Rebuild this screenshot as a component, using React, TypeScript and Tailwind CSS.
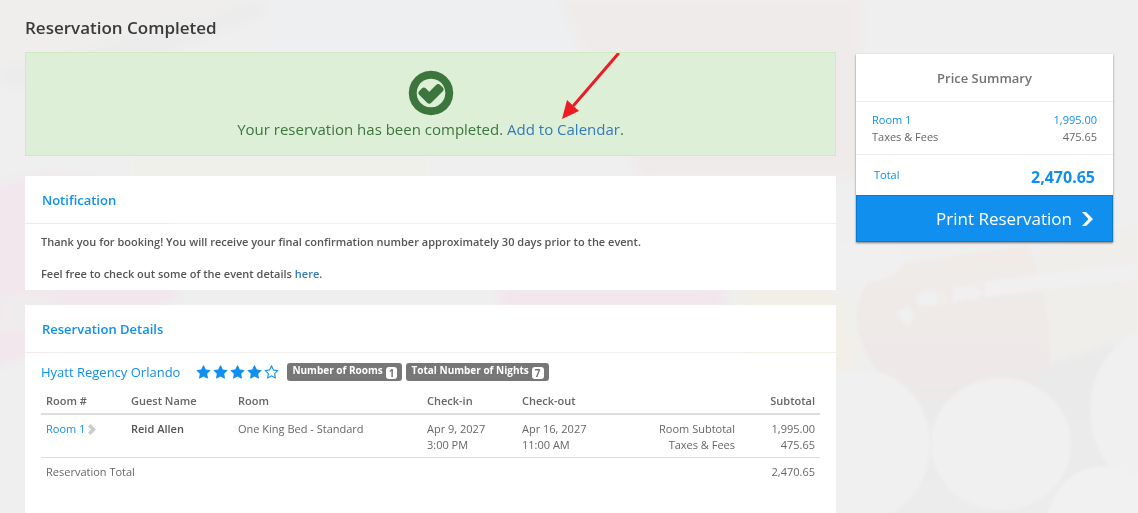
import type { ReactNode } from 'react';

const STAR =
  'M1728 647q0 22-26 48l-363 354 86 500q1 7 1 20 0 21-10.5 35.5t-30.5 14.5q-19 0-40-12l-449-236-449 236q-22 12-40 12-21 0-31.5-14.5t-10.5-35.5q0-6 2-20l86-500-364-354q-25-27-25-48 0-37 56-46l502-73 225-455q19-41 49-41t49 41l225 455 502 73q56 9 56 46z';
const STAR_EMPTY =
  'M1201 1004l306-297-422-62-189-382-189 382-422 62 306 297-73 421 378-199 377 199zm527-357q0 22-26 48l-363 354 86 500q1 7 1 20 0 50-41 50-19 0-40-12l-449-236-449 236q-22 12-40 12-21 0-31.5-14.5t-10.5-35.5q0-6 2-20l86-500-364-354q-25-27-25-48 0-37 56-46l502-73 225-455q19-41 49-41t49 41l225 455 502 73q56 9 56 46z';
const CHECK_CIRCLE =
  'M1299 813l-422 422q-19 19-45 19t-45-19l-294-294q-19-19-19-45t19-45l102-102q19-19 45-19t45 19l147 147 275-275q19-19 45-19t45 19l102 102q19 19 19 45t-19 45zm141 83q0-148-73-273t-198-198-273-73-273 73-198 198-73 273 73 273 198 198 273 73 273-73 198-198 73-273zm224 0q0 209-103 385.5t-279.5 279.5-385.5 103-385.5-103-279.5-279.5-103-385.5 103-385.5 279.5-279.5 385.5-103 385.5 103 279.5 279.5 103 385.5z';

const rooms = [
  {
    id: 1,
    guest: 'Reid Allen',
    type: 'One King Bed - Standard',
    checkIn: ['Apr 9, 2027', '3:00 PM'],
    checkOut: ['Apr 16, 2027', '11:00 AM'],
    subtotal: '1,995.00',
    taxes: '475.65',
  },
];

function Backdrop() {
  return (
    <svg
      className="fixed inset-0 -z-10 h-full w-full bg-[#efefef]"
      viewBox="0 0 1138 513"
      preserveAspectRatio="xMidYMid slice"
      aria-hidden="true"
    >
      <defs>
        <filter id="soft" x="-10%" y="-10%" width="120%" height="120%">
          <feGaussianBlur stdDeviation="5" />
        </filter>
        <filter id="edge" x="-10%" y="-10%" width="120%" height="120%">
          <feGaussianBlur stdDeviation="1.5" />
        </filter>
        <linearGradient id="capsule" x1="0" y1="0" x2="0" y2="1">
          <stop offset="0" stopColor="#f0ebe7" />
          <stop offset="1" stopColor="#ede8e8" />
        </linearGradient>
        <linearGradient id="gap" x1="0" y1="0" x2="0" y2="1">
          <stop offset="0" stopColor="#e9e9e9" />
          <stop offset="1" stopColor="#ececec" />
        </linearGradient>
      </defs>
      <g filter="url(#soft)">
        <path d="M0 0H260L120 40L0 70Z" fill="#efeeec" />
        <path d="M0 70L130 35L260 0H300L180 50L30 90L0 85Z" fill="#ececec" />
        <path d="M265 0H600L560 60H270Z" fill="#eeeff1" />
        <path d="M560 0H860V180H640Z" fill="#efebea" />
        <path d="M-20 190Q60 160 130 190T175 300Q120 340 -20 370Z" fill="#f2e7ed" />
        <path d="M0 300Q60 280 70 330H0Z" fill="#efeced" />
        <path d="M130 156H430V178H130Z" fill="#f0f0ea" />
        <path d="M500 286H725V310H500Z" fill="#f2e6ed" />
        <path d="M740 290H845L855 375H740Z" fill="#f1efe7" />
        <path d="M1036 250L1150 220V355L1050 370Z" fill="#efeeeb" />
        <path d="M860 370Q950 400 1110 345L1150 350V530H850Z" fill="url(#gap)" />
      </g>
      <g filter="url(#edge)">
        <path d="M858 330Q850 275 905 264L1028 245Q1052 300 1050 370Q970 400 910 393Q870 380 858 330Z" fill="url(#capsule)" />
        <ellipse cx="866" cy="260" rx="38" ry="22" fill="#f0f0f0" />
        <path d="M984 281L1138 263V279L984 297Z" fill="#f0f0f0" />
        <path d="M974 283L984 294L976 299L952 302L953 288Z" fill="#f0f0f0" />
        <path d="M940 290L949 303L943 304Z" fill="#f0f0f0" />
        <path d="M920 292L936 290L940 304L920 307L916 300Z" fill="#f0f0f0" />
        <path d="M896 313L909 306L914 317L908 328Z" fill="#f0f0f0" />
        <ellipse cx="864" cy="445" rx="66" ry="75" fill="#f0f0f0" />
        <ellipse cx="1001" cy="444" rx="70" ry="66" fill="#f0f0f0" />
        <ellipse cx="1160" cy="410" rx="70" ry="82" fill="#f0f0f0" />
        <ellipse cx="1104" cy="530" rx="58" ry="64" fill="#f1f1f1" />
      </g>
    </svg>
  );
}

function Stars({ rating }: { rating: number }) {
  return (
    <div className="flex gap-[2px] text-[#108fee]" role="img" aria-label={`${rating} stars`}>
      {[1, 2, 3, 4, 5].map((n) => (
        <svg key={n} className="size-[15px]" viewBox="0 0 1792 1792" fill="currentColor">
          <path d={n <= rating ? STAR : STAR_EMPTY} />
        </svg>
      ))}
    </div>
  );
}

function Tag({ label, value }: { label: string; value: number }) {
  return (
    <span className="flex h-[18px] items-center gap-[3px] rounded-[3px] bg-[#777] px-[5px] text-[10px] leading-[14px] font-bold text-white">
      <span className="pb-1">{label}</span>
      <span className="mt-[2px] h-3 rounded-[3px] bg-white px-[3px] leading-3 text-[#777]">{value}</span>
    </span>
  );
}

function Panel({ title, className, children }: { title: string; className: string; children: ReactNode }) {
  return (
    <section className={`flex flex-col gap-px ${className}`}>
      <h2 className="bg-white px-[17px] pt-[14px] pb-[13px] text-[13px] leading-5 font-semibold text-[#108fee]">{title}</h2>
      {children}
    </section>
  );
}

function PriceSummary() {
  return (
    <aside className="mt-[54px] w-[257px] shrink-0 self-start bg-white shadow-[0_1px_2px_rgba(0,0,0,0.5)]">
      <h2 className="border-b border-[#ececec] pt-[14px] pb-[13px] text-center text-[13px] leading-5 font-semibold text-[#737373]">
        Price Summary
      </h2>
      <dl className="grid grid-cols-[1fr_auto] border-b border-[#ececec] px-4 pt-[9px] pb-[9px] text-[11px] leading-[17px] text-[#666]">
        <dt className="text-[#108fee]">Room 1</dt>
        <dd className="text-right text-[#108fee]">1,995.00</dd>
        <dt>Taxes &amp; Fees</dt>
        <dd className="text-right">475.65</dd>
      </dl>
      <div className="flex h-10 justify-between px-[18px] text-[#108fee]">
        <span className="pt-3 text-[11px] leading-4">Total</span>
        <span className="pt-3 text-[16px] leading-5 font-bold">2,470.65</span>
      </div>
      <button
        type="button"
        className="flex h-[47px] w-full items-center justify-end gap-[10px] border border-[#0c7acc] bg-[#108fee] pr-[19px] text-[17px] leading-6 text-white"
      >
        Print Reservation
        <svg className="h-[14px] w-[11px]" viewBox="0 0 11 14" fill="currentColor" aria-hidden="true">
          <path d="M0 0H4L11 7L4 14H0L6.5 7Z" />
        </svg>
      </button>
    </aside>
  );
}

function ReservationTable() {
  return (
    <table className="mt-[11px] w-full table-fixed border-collapse text-[11px] leading-4 text-[#666]">
      <thead>
        <tr className="border-b-2 border-[#ddd] text-left text-[#666]">
          <th className="w-[85px] px-[5px] pb-1 font-semibold">Room #</th>
          <th className="w-[107px] px-[5px] pb-1 font-semibold">Guest Name</th>
          <th className="w-[189px] px-[5px] pb-1 font-semibold">Room</th>
          <th className="w-[95px] px-[5px] pb-1 font-semibold">Check-in</th>
          <th className="w-[95px] px-[5px] pb-1 font-semibold">Check-out</th>
          <td />
          <th className="w-[80px] px-[5px] pb-1 text-right font-semibold">Subtotal</th>
        </tr>
      </thead>
      <tbody>
        {rooms.map((room) => (
          <tr key={room.id} className="align-top">
            <td className="px-[5px] pt-[6px] pb-1">
              <a href="#room" className="flex items-center gap-[3px] text-[#108fee]">
                Room {room.id}
                <svg className="h-[11px] w-2 text-[#ccc]" viewBox="0 0 8 11" fill="currentColor" aria-hidden="true">
                  <path d="M2.5 0L8 5.5L2.5 11L0 8.5L3 5.5L0 2.5Z" />
                </svg>
              </a>
            </td>
            <td className="px-[5px] pt-[6px] pb-1 font-semibold text-[#555]">{room.guest}</td>
            <td className="px-[5px] pt-[6px] pb-1">{room.type}</td>
            <td className="px-[5px] pt-[6px] pb-1">
              {room.checkIn[0]}
              <br />
              {room.checkIn[1]}
            </td>
            <td className="px-[5px] pt-[6px] pb-1">
              {room.checkOut[0]}
              <br />
              {room.checkOut[1]}
            </td>
            <td className="px-[5px] pt-[6px] pb-1 text-right">
              Room Subtotal
              <br />
              Taxes &amp; Fees
            </td>
            <td className="px-[5px] pt-[6px] pb-1 text-right">
              {room.subtotal}
              <br />
              {room.taxes}
            </td>
          </tr>
        ))}
      </tbody>
      <tfoot>
        <tr className="border-t border-[#ddd]">
          <td colSpan={6} className="px-[5px] pt-[6px]">
            Reservation Total
          </td>
          <td className="px-[5px] pt-[6px] text-right">2,470.65</td>
        </tr>
      </tfoot>
    </table>
  );
}

export default function App() {
  return (
    <div className="isolate flex min-h-screen gap-5 px-[25px] font-['Open_Sans',sans-serif]">
      <Backdrop />
      <main className="flex min-w-0 flex-1 flex-col">
        <h1 className="pt-4 text-[17px] leading-6 font-semibold text-[#3a3a3a]">Reservation Completed</h1>

        <div className="relative mt-3 flex h-[104px] flex-col items-center border border-[#d0e9c0] bg-[#deefd8] pt-[15px] text-[15px] leading-5 text-[#3c763d]">
          <svg
            className="mb-px size-[50px]"
            viewBox="0 0 1792 1792"
            fill="currentColor"
            stroke="currentColor"
            strokeWidth="60"
            aria-hidden="true"
          >
            <path d={CHECK_CIRCLE} />
          </svg>
          <p>
            Your reservation has been completed.{' '}
            <a href="#calendar" className="text-[#337ab7]">
              Add to Calendar
            </a>
            .
          </p>
          {/* pointer to the calendar link */}
          <svg className="absolute top-0 left-1/2 ml-[130px] h-[67px] w-[60px]" viewBox="0 0 60 67" aria-hidden="true">
            <path d="M57 1L13 52" stroke="#ed1c24" strokeWidth="3" strokeLinecap="round" />
            <path d="M1 66L6 47L18 58Z" fill="#ed1c24" />
          </svg>
        </div>

        <Panel title="Notification" className="mt-5">
          <div className="bg-white px-4 pt-[10px] pb-2 text-[11px] leading-4 font-semibold text-[#555]">
            <p>Thank you for booking! You will receive your final confirmation number approximately 30 days prior to the event.</p>
            <p className="mt-4">
              Feel free to check out some of the event details{' '}
              <a href="#event" className="text-[#337ab7]">
                here
              </a>
              .
            </p>
          </div>
        </Panel>

        <Panel title="Reservation Details" className="mt-[15px] flex-1">
          <div className="flex-1 bg-white px-4 pt-[9px]">
            <div className="flex items-center">
              <a href="#hotel" className="text-[13px] leading-5 text-[#108fee]">
                Hyatt Regency Orlando
              </a>
              <div className="mr-2 ml-4">
                <Stars rating={4} />
              </div>
              <div className="flex gap-1">
                <Tag label="Number of Rooms" value={1} />
                <Tag label="Total Number of Nights" value={7} />
              </div>
            </div>
            <ReservationTable />
          </div>
        </Panel>
      </main>
      <PriceSummary />
    </div>
  );
}
